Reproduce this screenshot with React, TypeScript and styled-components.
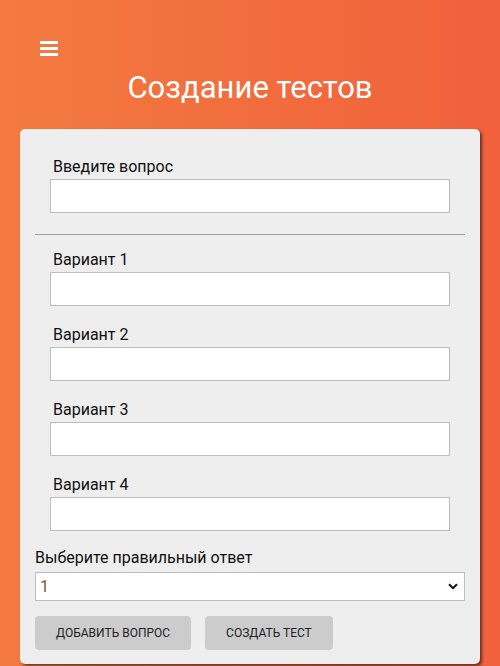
import React from "react";
import styled, { createGlobalStyle } from "styled-components";

const Global = createGlobalStyle`
  html, body { margin: 0; padding: 0; }
  body {
    min-height: 666px;
    background: linear-gradient(to right, #f37a40, #f0603b);
    font-family: Roboto, "Noto Sans", sans-serif;
    overflow: hidden;
  }
  * { box-sizing: border-box; }
`;

const Page = styled.div`
  display: flex;
  flex-direction: column;
  min-height: 666px;
`;

const Header = styled.header`
  display: flex;
  flex-direction: column;
  padding: 41px 20px 0 40px;
`;

const Burger = styled.button`
  display: flex;
  flex-direction: column;
  gap: 3px;
  width: 18px;
  padding: 0;
  border: none;
  background: none;
  cursor: pointer;
`;

const Bar = styled.span`
  display: block;
  height: 3px;
  width: 18px;
  background: #fff;
`;

const Title = styled.h1`
  margin: 12px 0 0 -20px;
  text-align: center;
  color: #fff;
  font-weight: 400;
  font-size: 31px;
  line-height: 40px;
`;

const Card = styled.div`
  margin: 21px 20px 0 20px;
  background: #eeeeee;
  border-radius: 5px;
  padding: 15px 15px 14px 15px;
  box-shadow: 2px 2px 3px rgba(0, 0, 0, 0.55);
  display: flex;
  flex-direction: column;
`;

const Field = styled.div<{ $top: number }>`
  display: flex;
  flex-direction: column;
  margin: ${(p) => p.$top}px 15px 0 15px;
`;

const Label = styled.label`
  font-size: 16px;
  line-height: 19px;
  color: #111;
  margin: 0 0 3px 3px;
`;

const Input = styled.input`
  height: 34px;
  width: 100%;
  border: 1px solid #bdbdbd;
  background: #fff;
  font-family: inherit;
  font-size: 16px;
  padding: 0 8px;
  outline: none;
`;

const Divider = styled.hr`
  margin: 21px 0 0 0;
  border: none;
  border-top: 1px solid #a0a0a0;
  height: 0;
`;

const SelectLabel = styled.label`
  font-size: 16px;
  line-height: 19px;
  color: #111;
  margin-top: 17px;
  margin-bottom: 5px;
`;

const SelectWrap = styled.div`
  position: relative;
  display: flex;
`;

const Select = styled.select`
  appearance: none;
  width: 100%;
  height: 29px;
  border: 1px solid #bdbdbd;
  background: #fff;
  font-family: inherit;
  font-size: 16px;
  color: #7a5a2a;
  padding: 0 4px;
  outline: none;
`;

const Chevron = styled.svg`
  position: absolute;
  right: 7px;
  top: 11px;
  pointer-events: none;
`;

const Buttons = styled.div`
  display: flex;
  gap: 14px;
  margin-top: 15px;
`;

const Button = styled.button`
  height: 34px;
  padding: 0 21px;
  border: none;
  border-radius: 4px;
  background: #cccccc;
  color: #222;
  font-family: inherit;
  font-size: 12px;
  text-transform: uppercase;
  cursor: pointer;
`;

export default function App() {
  return (
    <Page>
      <Global />
      <Header>
        <Burger aria-label="menu">
          <Bar />
          <Bar />
          <Bar />
        </Burger>
        <Title>Создание тестов</Title>
      </Header>
      <Card>
        <Field $top={13}>
          <Label>Введите вопрос</Label>
          <Input />
        </Field>
        <Divider />
        {[1, 2, 3, 4].map((n) => (
          <Field key={n} $top={n === 1 ? 15 : 19}>
            <Label>Вариант {n}</Label>
            <Input />
          </Field>
        ))}
        <SelectLabel>Выберите правильный ответ</SelectLabel>
        <SelectWrap>
          <Select defaultValue="1">
            <option value="1">1</option>
            <option value="2">2</option>
            <option value="3">3</option>
            <option value="4">4</option>
          </Select>
          <Chevron width="10" height="7" viewBox="0 0 10 7">
            <path d="M1 1.2 L5 5.2 L9 1.2" fill="none" stroke="#111" strokeWidth="2" />
          </Chevron>
        </SelectWrap>
        <Buttons>
          <Button>Добавить вопрос</Button>
          <Button>Создать тест</Button>
        </Buttons>
      </Card>
    </Page>
  );
}
